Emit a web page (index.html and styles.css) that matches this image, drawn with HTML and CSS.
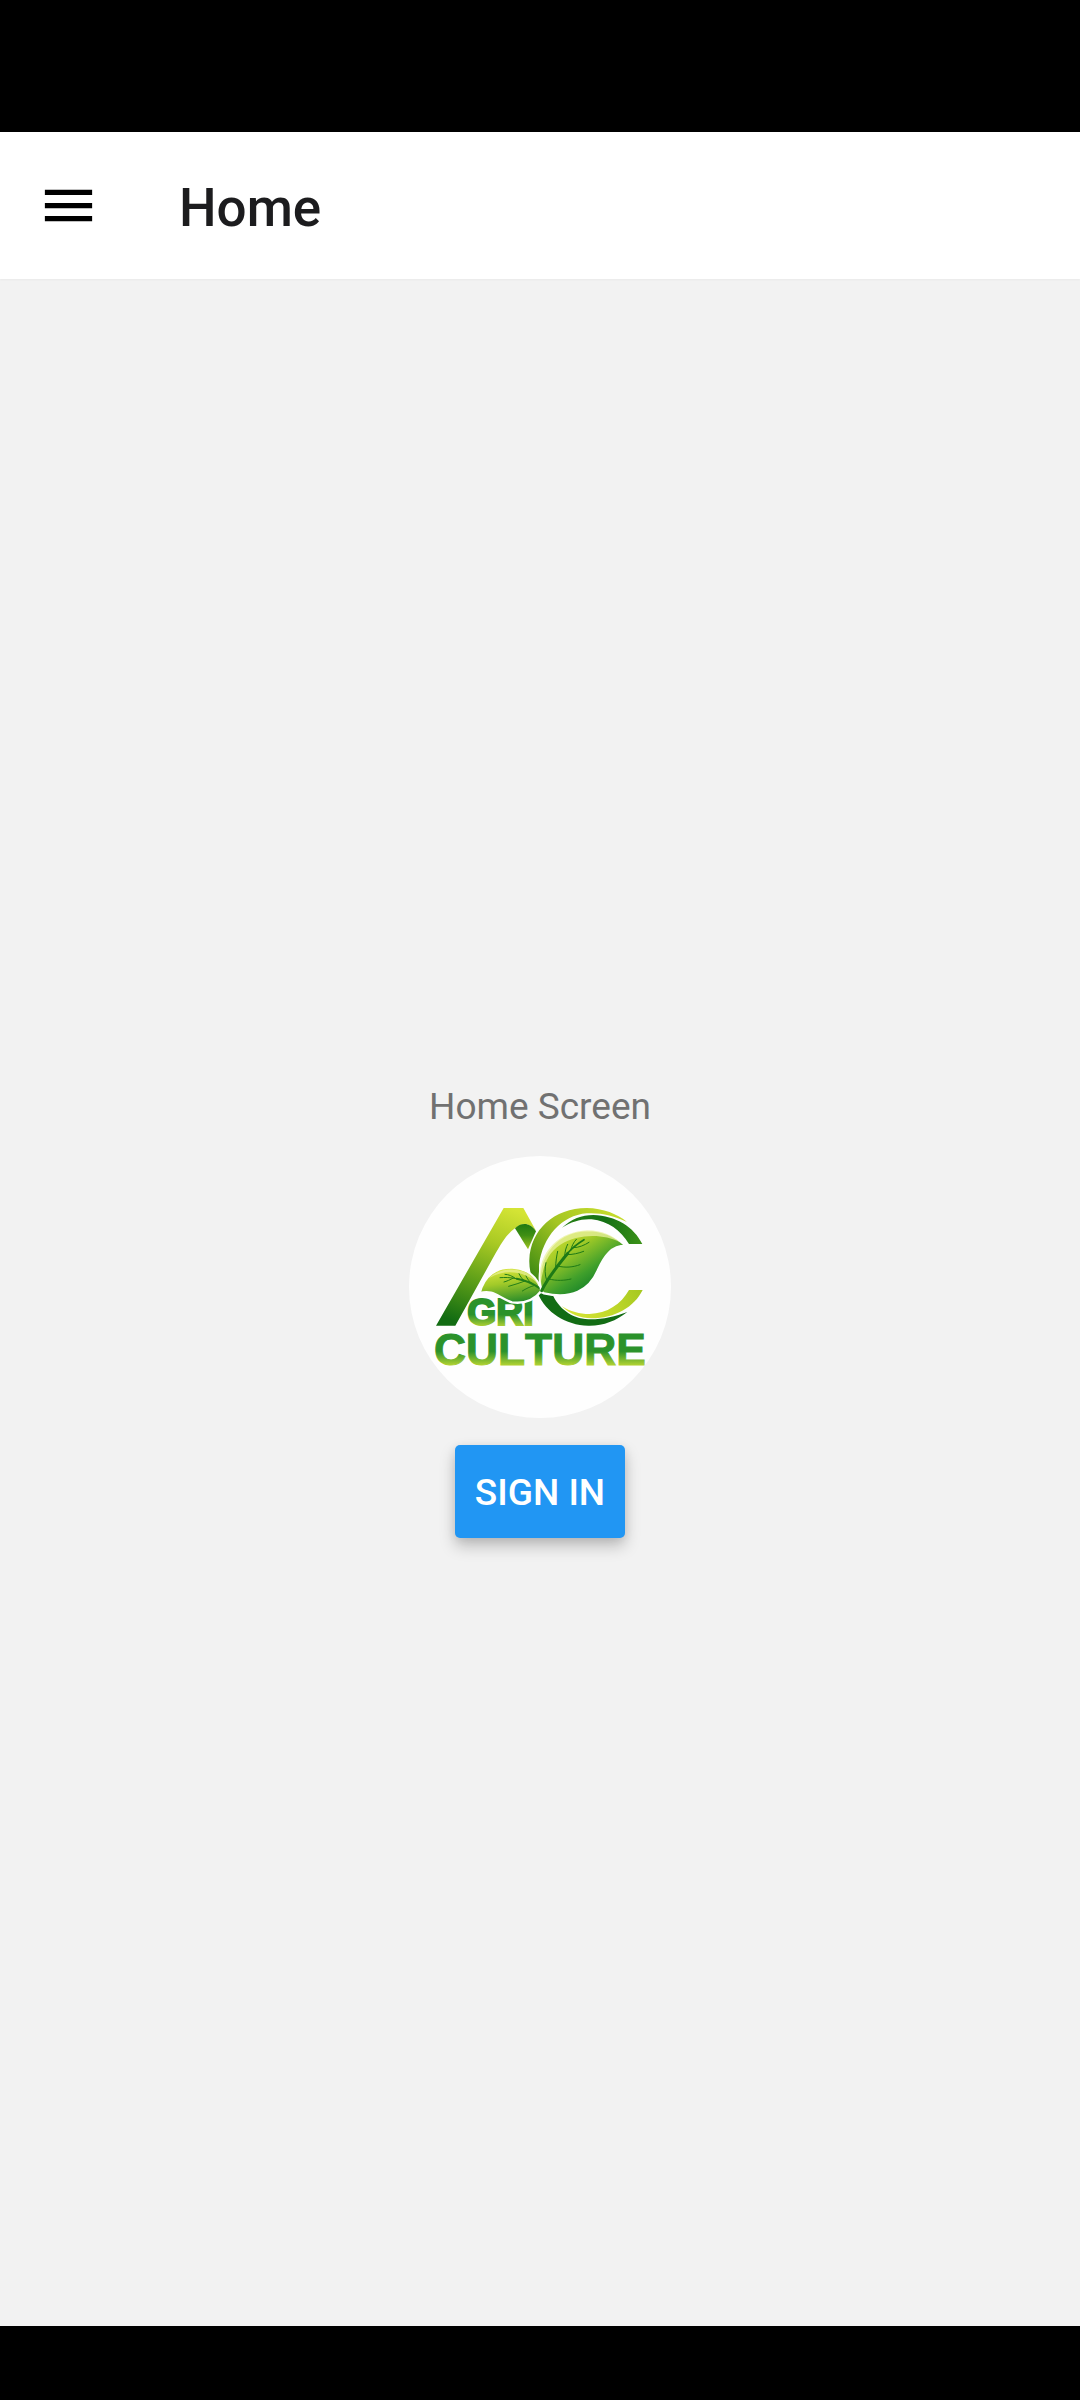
FILE: index.html
```html
<!DOCTYPE html>
<html lang="en">
<head>
  <meta charset="utf-8">
  <meta name="viewport" content="width=device-width, initial-scale=1">
  <title>Home</title>
  <link rel="stylesheet" href="styles.css">
</head>
<body>
  <div class="status-bar"></div>
  <header class="app-bar">
    <button class="menu-button" type="button" aria-label="Open menu">
      <svg class="menu-icon" viewBox="0 0 24 24" aria-hidden="true"><path d="M3 18h18v-2H3v2zm0-5h18v-2H3v2zm0-7v2h18V6H3z"/></svg>
    </button>
    <h1 class="title">Home</h1>
  </header>
  <main class="screen">
    <p class="caption">Home Screen</p>
    <svg class="logo" viewBox="27 18 786 786" role="img" aria-label="Agri Culture">
      <defs>
        <linearGradient id="a-face" gradientUnits="userSpaceOnUse" x1="330" y1="174" x2="200" y2="527">
          <stop offset="0" stop-color="#d4e435"/><stop offset=".3" stop-color="#aaca24"/><stop offset=".65" stop-color="#5c9e18"/><stop offset="1" stop-color="#126c12"/>
        </linearGradient>
        <linearGradient id="a-fold" x1="0" y1="0" x2="0" y2="1">
          <stop offset="0" stop-color="#207a10"/><stop offset=".45" stop-color="#3f8f14"/><stop offset="1" stop-color="#a0c41f"/>
        </linearGradient>
        <linearGradient id="c-face" gradientUnits="userSpaceOnUse" x1="620" y1="180" x2="400" y2="420">
          <stop offset="0" stop-color="#c4da2c"/><stop offset=".4" stop-color="#a3c522"/><stop offset=".75" stop-color="#5f9e17"/><stop offset="1" stop-color="#2d8011"/>
        </linearGradient>
        <linearGradient id="c-upper" gradientUnits="userSpaceOnUse" x1="490" y1="220" x2="727" y2="270">
          <stop offset="0" stop-color="#247f14"/><stop offset=".5" stop-color="#157015"/><stop offset="1" stop-color="#3b9218"/>
        </linearGradient>
        <linearGradient id="c-lower" gradientUnits="userSpaceOnUse" x1="487" y1="500" x2="727" y2="420">
          <stop offset="0" stop-color="#d9e637"/><stop offset=".55" stop-color="#c2d92b"/><stop offset="1" stop-color="#a5c820"/>
        </linearGradient>
        <linearGradient id="leaf-big" gradientUnits="userSpaceOnUse" x1="450" y1="260" x2="555" y2="425">
          <stop offset="0" stop-color="#cfe02f"/><stop offset=".35" stop-color="#a1ca27"/><stop offset=".75" stop-color="#3f9f2b"/><stop offset="1" stop-color="#188329"/>
        </linearGradient>
        <linearGradient id="leaf-small" gradientUnits="userSpaceOnUse" x1="330" y1="354" x2="345" y2="460">
          <stop offset="0" stop-color="#d5e43b"/><stop offset=".4" stop-color="#a2ca29"/><stop offset="1" stop-color="#23892a"/>
        </linearGradient>
        <linearGradient id="word-top" gradientUnits="userSpaceOnUse" x1="0" y1="450" x2="0" y2="530">
          <stop offset="0" stop-color="#2b922b"/><stop offset=".55" stop-color="#2b922b"/><stop offset="1" stop-color="#b2d234"/>
        </linearGradient>
        <linearGradient id="word-bottom" gradientUnits="userSpaceOnUse" x1="0" y1="550" x2="0" y2="648">
          <stop offset="0" stop-color="#2b922b"/><stop offset=".55" stop-color="#2b922b"/><stop offset="1" stop-color="#b8d532"/>
        </linearGradient>
      </defs>
      <circle cx="420" cy="411" r="393" fill="#fefefe"/>

      <!-- Letter A with its folded ribbon -->
      <path fill="url(#a-face)" d="M108 527 311 174H370L408 242C388 216 363 219 345 235 320 254 310 270 280 322L166 527Z"/>
      <path fill="url(#a-fold)" d="M345 235C363 217 390 216 408 244L384 298Z"/>

      <!-- Letter C -->
      <path fill="url(#c-face)" d="M417 425C398 400 387 365 388 330 391 240 462 174 560 174 610 175 653 192 681 216 640 197 601 187 560 190 485 196 428 260 417 345Z"/>
      <path fill="url(#c-upper)" d="M486 233C515 207 545 195 580 195 647 197 702 231 727 282H687C661 241 625 213 575 208 543 206 515 215 486 233Z"/>
      <path fill="#126c14" d="M413 430H456C475 475 514 506 565 508 607 509 645 500 682 486 648 513 609 528 565 527 496 526 439 488 413 430Z"/>
      <path fill="url(#c-lower)" d="M485 468C511 485 539 492 568 492 622 490 663 463 687 420H728C703 471 645 505 575 505 540 504 510 493 485 468Z"/>

      <text class="word" x="202" y="526" font-size="112" fill="url(#word-top)" stroke="url(#word-top)" stroke-width="6">GRI</text>
      <text class="word" x="102" y="646" font-size="133" fill="url(#word-bottom)" stroke="url(#word-bottom)" stroke-width="3">CULTURE</text>

      <!-- Small leaf -->
      <path fill="url(#leaf-small)" stroke="#fefefe" stroke-width="7" d="M239 430C252 375 291 351 337 353 381 356 413 380 424 423 403 450 373 462 336 457 298 446 279 416 239 430Z"/>
      <path fill="#e7ef91" opacity=".75" d="M268 384C298 350 382 343 417 404 380 364 316 354 268 384Z"/>
      <g fill="none" stroke="#237f18" stroke-linecap="round">
        <path stroke-width="6" d="M422 417C404 403 380 391 350 386"/>
        <path stroke-width="3" d="M350 386C330 382 315 382 300 383M346 385C337 378 325 373 315 373M372 392C365 385 360 378 357 371M397 403C388 394 381 386 378 378M375 393C360 398 343 405 326 409M402 407C390 410 378 416 367 423M340 384C331 389 320 394 312 396"/>
      </g>

      <!-- Large leaf -->
      <path fill="url(#leaf-big)" stroke="#fefefe" stroke-width="7" d="M425 426C401 340 453 244 563 240 616 240 651 262 677 287 635 287 613 317 594 360 568 422 513 449 432 430Z"/>
      <path fill="#e9f1a0" opacity=".75" d="M422 402C407 325 462 245 563 241 605 241 638 257 660 277 610 251 536 251 481 284 438 312 429 354 422 402Z"/>
      <g fill="none" stroke="#1d7a16" stroke-linecap="round">
        <path stroke-width="9" d="M425 422C445 380 475 345 503 310"/>
        <path stroke-width="5" d="M503 310C515 294 534 280 552 269"/>
        <path stroke-width="3" d="M512 302C514 290 521 276 529 268M494 321C494 306 498 292 503 283M467 352C467 335 470 318 473 304M440 391C434 374 434 355 438 338M520 293C536 293 553 286 567 277M500 314C518 314 536 310 551 304M472 348C496 354 519 352 540 344M447 387C470 393 493 392 513 387"/>
      </g>
    </svg>
    <button class="sign-in" type="button">SIGN IN</button>
  </main>
  <div class="nav-bar"></div>
</body>
</html>
```
FILE: styles.css
```css
* {
  box-sizing: border-box;
}

body {
  margin: 0;
  min-height: 100vh;
  display: flex;
  flex-direction: column;
  background: #f2f2f2;
  font-family: Roboto, "Liberation Sans", sans-serif;
}

.status-bar {
  height: 132px;
  background: #000;
}

.app-bar {
  height: 147px;
  padding-left: 37px;
  display: flex;
  align-items: center;
  gap: 79px;
  background: #fff;
  box-shadow: 0 1px 2px rgba(0, 0, 0, 0.04);
}

.menu-button {
  padding: 0;
  border: 0;
  background: none;
}

.menu-icon {
  display: block;
  width: 63px;
  height: 63px;
}

.title {
  margin: 4px 0 0;
  font-size: 53px;
  line-height: 62px;
  font-weight: 500;
  color: #1c1c1e;
}

.screen {
  flex: 1;
  padding-top: 18px;
  display: flex;
  flex-direction: column;
  align-items: center;
  justify-content: center;
  gap: 27px;
}

.caption {
  margin: 0;
  font-size: 37px;
  line-height: 44px;
  color: #717171;
}

.logo {
  display: block;
  width: 262px;
  height: 262px;
}

.word {
  font-family: "Liberation Sans", Arial, sans-serif;
  font-weight: 700;
  font-kerning: none;
}

.sign-in {
  height: 93px;
  padding: 2px 20px 0;
  border: 0;
  border-radius: 5px;
  background: #2196f3;
  box-shadow: 0 8px 16px rgba(0, 0, 0, 0.22), 0 2px 10px rgba(0, 0, 0, 0.08);
  color: #fff;
  font-family: inherit;
  font-size: 37px;
  line-height: 44px;
  font-weight: 500;
}

.nav-bar {
  height: 74px;
  background: #000;
}
```
